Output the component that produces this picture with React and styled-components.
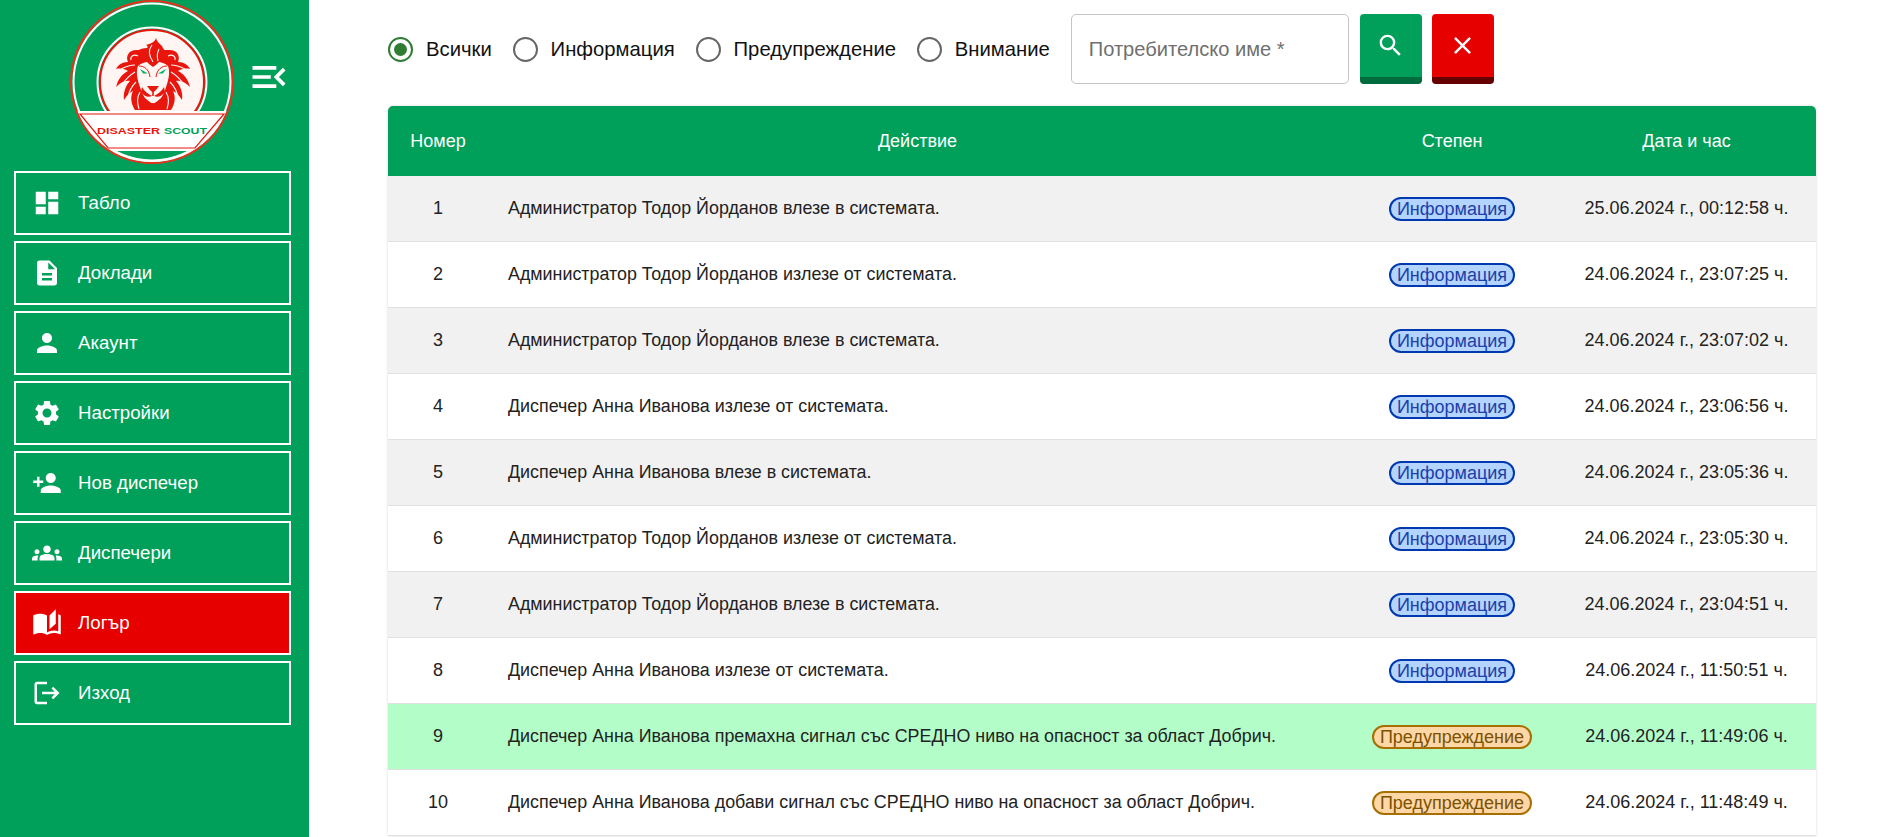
import React from "react";
import styled, { createGlobalStyle } from "styled-components";
import {
  MdDashboard,
  MdDescription,
  MdPerson,
  MdSettings,
  MdPersonAdd,
  MdGroups,
  MdAutoStories,
  MdLogout,
  MdMenuOpen,
  MdSearch,
  MdClose
} from "react-icons/md";

const GREEN = "#00a05a";
const RED = "#e60000";
const LOGO_RED = "#e8160c";

const GlobalStyle = createGlobalStyle`
  html, body {
    margin: 0;
    height: 100%;
    overflow: hidden;
    background: #fff;
    font-family: "Liberation Sans", Arial, sans-serif;
  }
`;

const Page = styled.div`
  display: grid;
  grid-template-columns: 309px 1fr;
  height: 837px;
  overflow: hidden;
`;

const Sidebar = styled.aside`
  background: ${GREEN};
  display: flex;
  flex-direction: column;
  gap: 7px;
`;

const Brand = styled.div`
  display: flex;
  align-items: center;
  padding-left: 70px;
  gap: 13px;
  height: 164px;
`;

const ToggleButton = styled.div`
  display: flex;
  color: #fff;
  margin-top: -10px;
`;

const NavList = styled.nav`
  display: flex;
  flex-direction: column;
  gap: 6px;
  padding: 0 18px 0 14px;
`;

const NavItem = styled.div`
  display: flex;
  align-items: center;
  gap: 16px;
  height: 64px;
  box-sizing: border-box;
  padding-left: 16px;
  border: 2px solid #fff;
  background: ${props => (props.$active ? RED : "transparent")};
  color: #fff;
  font-size: 18.7px;
`;

const Main = styled.main`
  padding: 14px 66px 0 79px;
  min-width: 0;
`;

const Filters = styled.div`
  display: flex;
  align-items: center;
  height: 70px;
  margin-bottom: 22px;
`;

const RadioOption = styled.label`
  display: flex;
  align-items: center;
  gap: 13px;
  margin-right: 20.8px;
  font-size: 20.3px;
  color: #111;
`;

const RadioMark = styled.span`
  box-sizing: border-box;
  display: flex;
  align-items: center;
  justify-content: center;
  width: 25px;
  height: 25px;
  border-radius: 50%;
  border: 2.5px solid ${props => (props.$checked ? "#2e7d32" : "#666")};

  &::after {
    content: "";
    width: 13px;
    height: 13px;
    border-radius: 50%;
    background: ${props => (props.$checked ? "#2e7d32" : "transparent")};
  }
`;

const SearchInput = styled.input`
  box-sizing: border-box;
  width: 278px;
  height: 70px;
  margin-right: 11px;
  padding: 0 17px;
  border: 1px solid #c4c4c4;
  border-radius: 5px;
  font-family: inherit;
  font-size: 20.1px;
  outline: none;

  &::placeholder {
    color: #6f6f6f;
    opacity: 1;
  }
`;

const SquareButton = styled.button`
  box-sizing: border-box;
  display: flex;
  align-items: center;
  justify-content: center;
  width: 62px;
  height: 70px;
  margin-right: 10px;
  padding: 0;
  border: 0;
  border-bottom: 7px solid ${props => (props.$danger ? "#660000" : "#006b3c")};
  border-radius: 4px;
  background: ${props => (props.$danger ? RED : GREEN)};
  color: #fff;
`;

const Table = styled.table`
  width: 1428px;
  table-layout: fixed;
  border-collapse: separate;
  border-spacing: 0;
  border-radius: 5px 5px 0 0;
  box-shadow: 0 0 3px rgba(0, 0, 0, 0.16);
  font-size: 18px;
  color: #222;
`;

const Column = styled.col`
  width: ${props => props.$width}px;
`;

const HeadCell = styled.th`
  height: 70px;
  padding: 0;
  background: ${GREEN};
  color: #fff;
  font-weight: 400;
  text-align: center;

  &:first-child {
    border-top-left-radius: 5px;
  }
  &:last-child {
    border-top-right-radius: 5px;
  }
`;

const Row = styled.tr`
  background: ${props => props.$bg};
`;

const Cell = styled.td`
  box-sizing: border-box;
  height: 66px;
  padding: 0 ${props => (props.$left ? "20px" : "0")};
  border-bottom: 1px solid #e0e0e0;
  font-size: ${props => (props.$left ? "17.86px" : "18px")};
  text-align: ${props => (props.$left ? "left" : "center")};
`;

const Badge = styled.span`
  display: inline-block;
  box-sizing: border-box;
  height: 24px;
  line-height: 20px;
  padding: 0 6px;
  border-radius: 12px;
  border: 2px solid ${props => (props.$warn ? "#a66f00" : "#0038b0")};
  background: ${props => (props.$warn ? "#ffd6a6" : "#b3d4ff")};
  color: ${props => (props.$warn ? "#7a5200" : "#1c3fa8")};
`;

const navItems = [
  { label: "Табло", Icon: MdDashboard },
  { label: "Доклади", Icon: MdDescription },
  { label: "Акаунт", Icon: MdPerson },
  { label: "Настройки", Icon: MdSettings },
  { label: "Нов диспечер", Icon: MdPersonAdd },
  { label: "Диспечери", Icon: MdGroups },
  { label: "Логър", Icon: MdAutoStories, active: true },
  { label: "Изход", Icon: MdLogout }
];

const radios = ["Всички", "Информация", "Предупреждение", "Внимание"];

const todorIn = "Администратор Тодор Йорданов влезе в системата.";
const todorOut = "Администратор Тодор Йорданов излезе от системата.";
const annaIn = "Диспечер Анна Иванова влезе в системата.";
const annaOut = "Диспечер Анна Иванова излезе от системата.";

const rows = [
  [todorIn, "info", "25.06.2024 г., 00:12:58 ч."],
  [todorOut, "info", "24.06.2024 г., 23:07:25 ч."],
  [todorIn, "info", "24.06.2024 г., 23:07:02 ч."],
  [annaOut, "info", "24.06.2024 г., 23:06:56 ч."],
  [annaIn, "info", "24.06.2024 г., 23:05:36 ч."],
  [todorOut, "info", "24.06.2024 г., 23:05:30 ч."],
  [todorIn, "info", "24.06.2024 г., 23:04:51 ч."],
  [annaOut, "info", "24.06.2024 г., 11:50:51 ч."],
  [
    "Диспечер Анна Иванова премахна сигнал със СРЕДНО ниво на опасност за област Добрич.",
    "warn",
    "24.06.2024 г., 11:49:06 ч."
  ],
  [
    "Диспечер Анна Иванова добави сигнал със СРЕДНО ниво на опасност за област Добрич.",
    "warn",
    "24.06.2024 г., 11:48:49 ч."
  ]
];

function rowColor(index) {
  if (index === 8) return "#b3fdc9";
  return index % 2 === 0 ? "#f1f1f1" : "#fff";
}

// half of the lion, mirrored around x=83
const LionHalf = () => (
  <g>
    <path
      fill={LOGO_RED}
      d="M68 50 C60 49 55 55 58 62 C52 62 48 65 46 69 C51 68 55 69 58 71 C52 74 48 79 46 87 C51 82 56 80 60 81 C55 86 53 94 54 100 C57 95 60 92 63 91 C60 97 61 104 65 110 L83 110 L83 50Z"
    />
    <path
      fill="none"
      stroke="#fff6f4"
      strokeWidth="1.1"
      d="M61 60 C60 56 64 54 68 56 M65 65 C60 65 55 67 51 69 M65 72 C60 75 55 80 52 85 M66 82 C62 86 59 92 58 97 M70 92 C67 97 67 103 69 109"
    />
    <path fill="#fff6f4" d="M83 62 C77 61 71 63 68 66 C66 71 67 78 69 84 C71 90 72 94 75 98 L83 105Z" />
    <path fill="none" stroke={LOGO_RED} strokeWidth="1" d="M69 66 C74 66 79 69 80 77" />
    <path fill="#00b368" d="M70 69 L78 73.5 L73 73.5Z" />
    <path fill={LOGO_RED} d="M72 87 C74 91 78 94 82 96 C78 98 74 96 71 92Z" />
    <path fill={LOGO_RED} d="M74 100 C77 99 80 104 83 103 L83 110 L72 110Z" />
  </g>
);

const Logo = () => (
  <svg width="164" height="164" viewBox="0 0 164 164">
    <defs>
      <clipPath id="logo-disc">
        <circle cx="82" cy="82" r="80" />
      </clipPath>
      <clipPath id="logo-ring">
        <circle cx="82" cy="82" r="77.5" />
      </clipPath>
    </defs>
    <circle cx="82" cy="82" r="81" fill={GREEN} stroke="#e8301c" strokeWidth="2" />
    <circle cx="82" cy="82" r="78.5" fill="none" stroke="#fff" strokeWidth="2" />
    <circle cx="82" cy="82" r="52" fill="#fff6f4" stroke={LOGO_RED} strokeWidth="2" />
    <circle cx="82" cy="82" r="54.5" fill="none" stroke="#fff" strokeWidth="2" />
    <LionHalf />
    <g transform="translate(166 0) scale(-1 1)">
      <LionHalf />
    </g>
    <path
      fill={LOGO_RED}
      d="M86 38 C85 42 80 44 76 45 C78 46 78 47 77 48 C73 48 70 49 67 51 C70 53 70 56 68 58 C72 58 76 60 79 64 L83 67 L87 64 C90 60 94 58 98 58 C96 55 96 53 98 51 C95 51 93 49 92 46 C90 44 87 42 86 38Z"
    />
    <path fill="none" stroke="#fff6f4" strokeWidth="1.1" d="M82 45 C78 50 79 56 83 62 M89 49 C87 53 87 57 88 61" />
    <path fill={LOGO_RED} d="M77 86 L89 86 L86 90 L83.8 92 L83.8 96 L82.2 96 L82.2 92 L80 90Z" />
    <rect x="0" y="111" width="164" height="53" fill="#fff" clipPath="url(#logo-disc)" />
    <rect x="0" y="151" width="164" height="13" fill={GREEN} clipPath="url(#logo-ring)" />
    <path fill="#fff" stroke={LOGO_RED} strokeWidth="1.2" d="M10 114 L154 114 L125 148 L38 148Z" />
    <text x="27" y="134" fontFamily="Liberation Sans" fontWeight="700" fontSize="9.7" fill={LOGO_RED} textLength="63" lengthAdjust="spacingAndGlyphs">
      DISASTER
    </text>
    <text x="94" y="134" fontFamily="Liberation Sans" fontWeight="700" fontSize="9.7" fill={GREEN} textLength="43" lengthAdjust="spacingAndGlyphs">
      SCOUT
    </text>
  </svg>
);

export default function App() {
  return (
    <Page>
      <GlobalStyle />
      <Sidebar>
        <Brand>
          <Logo />
          <ToggleButton>
            <MdMenuOpen size={44} />
          </ToggleButton>
        </Brand>
        <NavList>
          {navItems.map(({ label, Icon, active }) => (
            <NavItem key={label} $active={active}>
              <Icon size={30} />
              {label}
            </NavItem>
          ))}
        </NavList>
      </Sidebar>
      <Main>
        <Filters>
          {radios.map((label, i) => (
            <RadioOption key={label}>
              <RadioMark $checked={i === 0} />
              {label}
            </RadioOption>
          ))}
          <SearchInput placeholder="Потребителско име *" />
          <SquareButton>
            <MdSearch size={29} />
          </SquareButton>
          <SquareButton $danger>
            <MdClose size={29} />
          </SquareButton>
        </Filters>
        <Table>
          <colgroup>
            <Column $width={100} />
            <Column $width={859} />
            <Column $width={210} />
            <Column $width={259} />
          </colgroup>
          <thead>
            <tr>
              <HeadCell>Номер</HeadCell>
              <HeadCell>Действие</HeadCell>
              <HeadCell>Степен</HeadCell>
              <HeadCell>Дата и час</HeadCell>
            </tr>
          </thead>
          <tbody>
            {rows.map(([action, level, date], i) => (
              <Row key={date} $bg={rowColor(i)}>
                <Cell>{i + 1}</Cell>
                <Cell $left>{action}</Cell>
                <Cell>
                  <Badge $warn={level === "warn"}>
                    {level === "warn" ? "Предупреждение" : "Информация"}
                  </Badge>
                </Cell>
                <Cell>{date}</Cell>
              </Row>
            ))}
          </tbody>
        </Table>
      </Main>
    </Page>
  );
}
